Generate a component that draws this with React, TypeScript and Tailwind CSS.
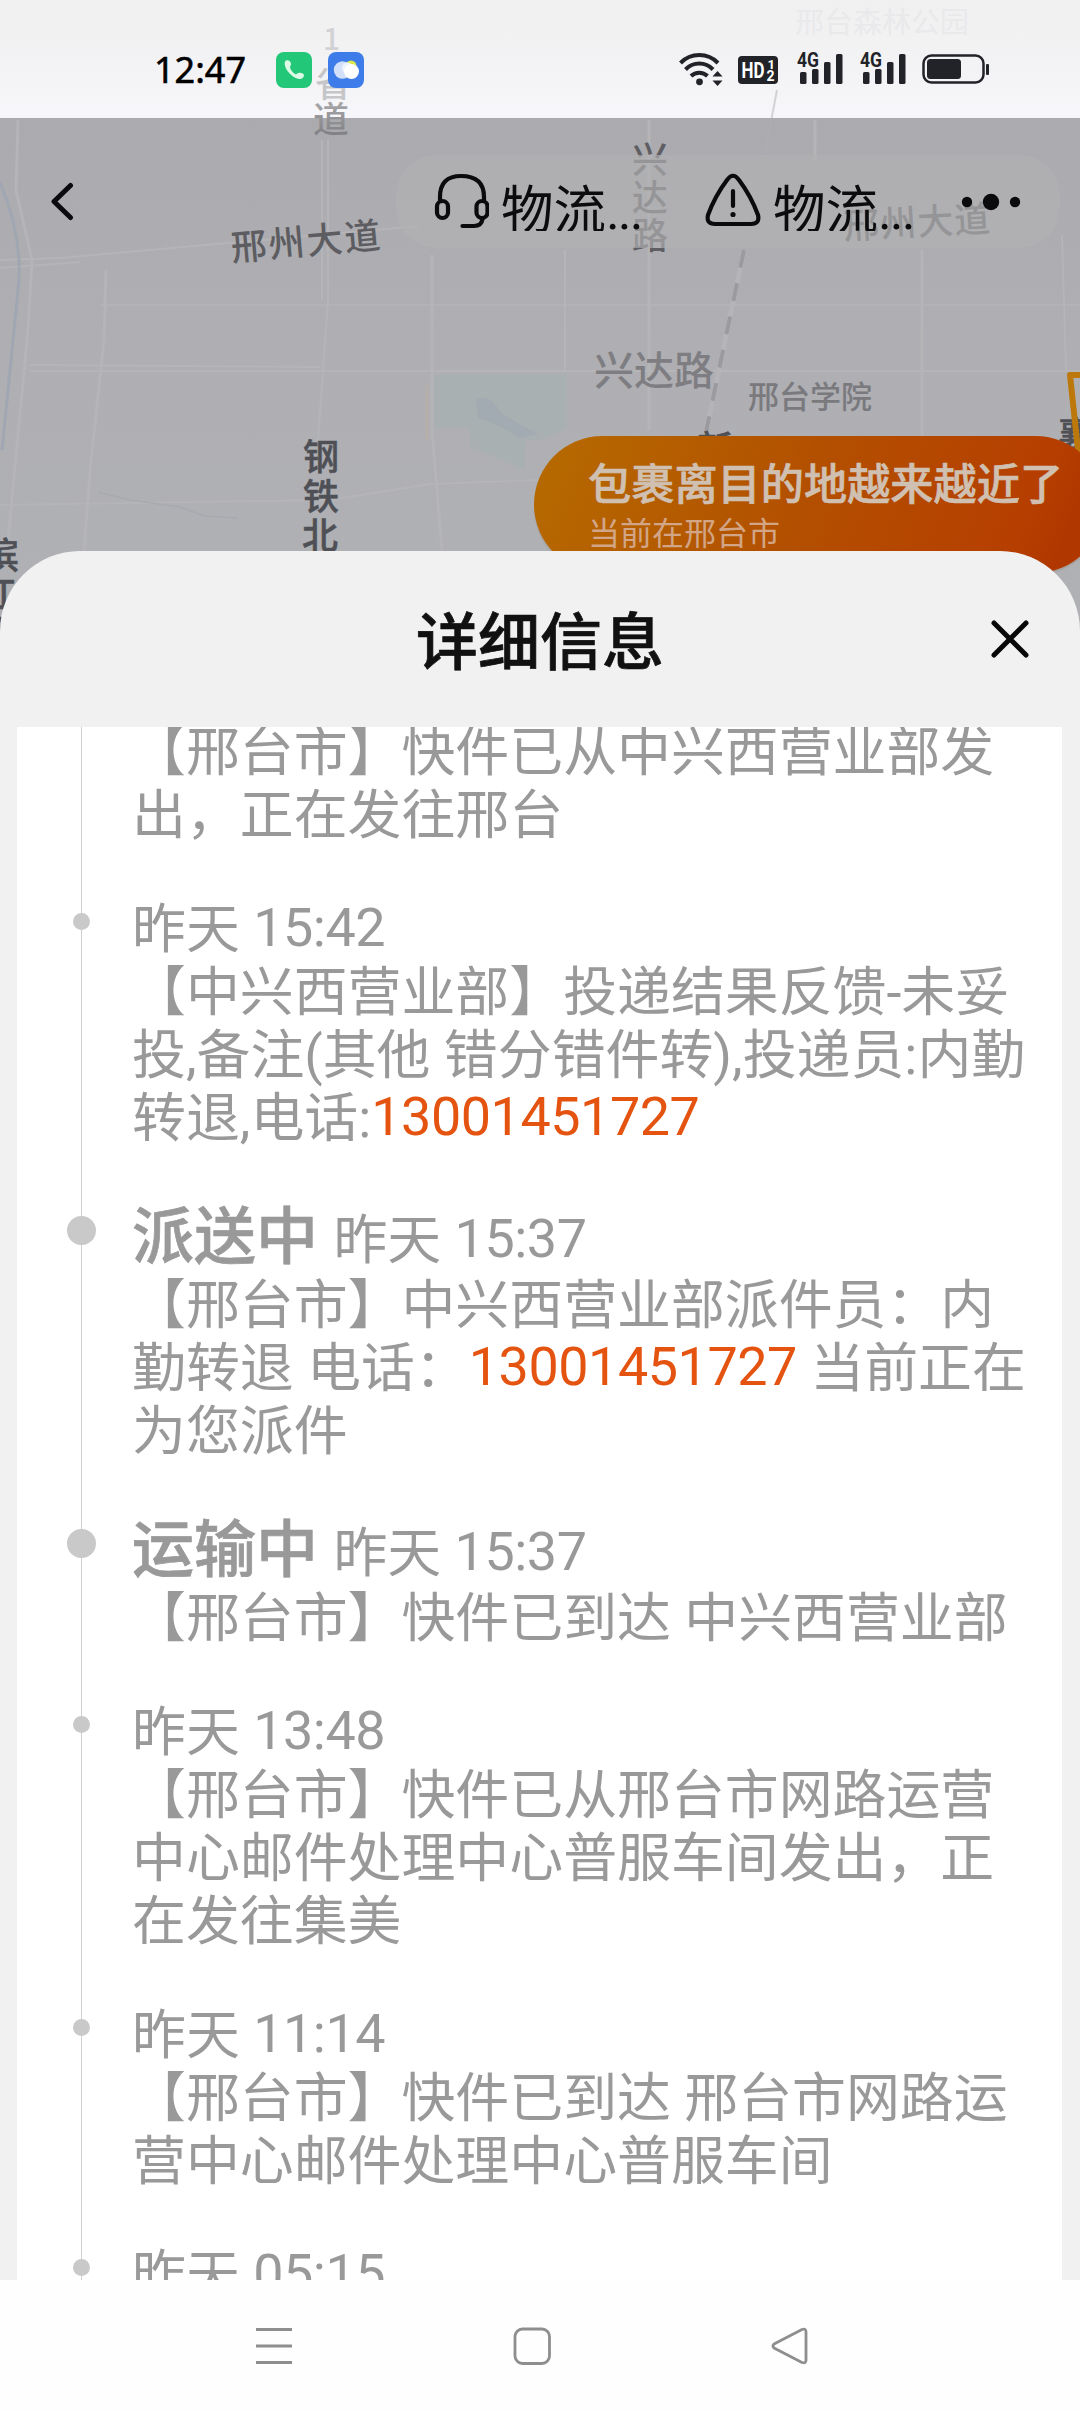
import React from "react";

type TrackEvent = {
  status?: string;
  day: string;
  clock: string;
  lines: React.ReactNode[];
};

const Phone = () => (
  <span className="align-[2px] leading-none tracking-[-0.45px] text-[#e4530f]">13001451727</span>
);

const Time = ({ day, clock }: { day: string; clock: string }) => (
  <span className="text-[53.9px]">
    {day} <span className="align-[2px] leading-none tracking-[-0.45px]">{clock}</span>
  </span>
);

const events: TrackEvent[] = [
  {
    day: "昨天",
    clock: "15:42",
    lines: [
      "【中兴西营业部】投递结果反馈-未妥",
      "投,备注(其他 错分错件转),投递员:内勤",
      <>转退,电话:<Phone /></>,
    ],
  },
  {
    status: "派送中",
    day: "昨天",
    clock: "15:37",
    lines: [
      "【邢台市】中兴西营业部派件员：内",
      <>勤转退 电话：<Phone /> 当前正在</>,
      "为您派件",
    ],
  },
  {
    status: "运输中",
    day: "昨天",
    clock: "15:37",
    lines: ["【邢台市】快件已到达 中兴西营业部"],
  },
  {
    day: "昨天",
    clock: "13:48",
    lines: [
      "【邢台市】快件已从邢台市网路运营",
      "中心邮件处理中心普服车间发出，正",
      "在发往集美",
    ],
  },
  {
    day: "昨天",
    clock: "11:14",
    lines: ["【邢台市】快件已到达 邢台市网路运", "营中心邮件处理中心普服车间"],
  },
  { day: "昨天", clock: "05:15", lines: [] },
];

const MapBackground = () => {
  return (
    <svg
      className="absolute left-0 top-0"
      width="1080"
      height="660"
      viewBox="0 0 1080 660"
      fontFamily="'Noto Sans CJK SC', sans-serif"
      fontWeight="500"
    >
      <defs>
        <linearGradient id="statusBg" x1="0" y1="0" x2="0" y2="1">
          <stop offset="0" stopColor="#f0f0f0" />
          <stop offset="0.6" stopColor="#f3f3f5" />
          <stop offset="1" stopColor="#f7f7fb" />
        </linearGradient>
        <linearGradient id="mapBg" x1="0" y1="0" x2="0" y2="1">
          <stop offset="0" stopColor="#aaaaaf" />
          <stop offset="0.4" stopColor="#aeaeb3" />
          <stop offset="1" stopColor="#b0b1b5" />
        </linearGradient>
        <linearGradient id="tip" x1="0" y1="0" x2="1" y2="0.1">
          <stop offset="0" stopColor="#b66b00" />
          <stop offset="0.5" stopColor="#b35000" />
          <stop offset="0.9" stopColor="#b63f00" />
          <stop offset="1" stopColor="#b03800" />
        </linearGradient>
        <linearGradient id="fade" x1="0" y1="0" x2="0" y2="1">
          <stop offset="0" stopColor="#b5b5b7" />
          <stop offset="1" stopColor="#77777a" />
        </linearGradient>
      </defs>

      <rect width="1080" height="118" fill="url(#statusBg)" />
      <rect y="118" width="1080" height="542" fill="url(#mapBg)" />

      {/* roads */}
      <g fill="none" stroke="#b5b5b8" strokeWidth="3">
        <path d="M0 260 L60 258 L420 226 M0 268 L80 262" strokeWidth="2" />
        <path d="M30 371 H1080 M30 365 L320 367" strokeWidth="2" />
        <path d="M0 505 L330 500 L430 484 L540 480" strokeWidth="2" />
        <path d="M100 305 H1080" strokeWidth="1.500" />
        <path d="M328 140 L328 300 L318 440 M322 140 L322 300" strokeWidth="2" />
        <path d="M106 270 L104 340 L90 470 L84 551" />
        <path d="M432 255 V430 L442 551" />
        <path d="M649 120 V430 M815 120 V160 M922 250 V436" />
        <path d="M565 250 V370 M1062 235 L1066 370" strokeWidth="2" />
        <path d="M18 120 L16 190 L32 260 L28 330 L8 540" />
        <path d="M744 250 L706 432" strokeWidth="5" />
      </g>
      <path d="M0 182 Q24 240 18 290 L2 450" fill="none" stroke="#a1a7b2" strokeWidth="3" />
      <path d="M744 250 L706 432" fill="none" stroke="#9b9b9f" strokeWidth="4" strokeDasharray="18 16" />
      <path d="M777 90 L765 153" fill="none" stroke="#b0b0b4" strokeWidth="2" opacity="0.5" />
      <path d="M98 492 L130 500 L180 507 L205 516 L238 518" fill="none" stroke="#a8aaaf" strokeWidth="1.500" />
      <path d="M434 375 H567 V428 L540 440 H525 V470 L470 446 V428 H434 Z" fill="#a9b0b1" />
      <path d="M476 400 Q490 392 500 412 Q518 424 538 434 L520 438 Q498 424 478 418 Z" fill="#a2aab2" />
      <path d="M427 385 V440" stroke="#b6aeab" strokeWidth="3" />

      {/* names that run below the header capsule */}
      <g fontSize="36" fill="#5f5f63">
        <text x="844" y="239" letterSpacing="1" transform="rotate(-3 844 239)">邢州大道</text>
        <text x="632" y="173">兴</text>
        <text x="632" y="211">达</text>
        <text x="632" y="249">路</text>
      </g>
      <rect x="396" y="155" width="664" height="93" rx="40" fill="#b2b2b3" opacity="0.66" />

      {/* road and place names */}
      <g fontSize="36">
        <text x="323" y="50" fontSize="30" fill="#d2d2d4">1</text>
        <text x="315" y="97" fill="#c6c6c8">省</text>
        <text x="313" y="133" fill="url(#fade)">道</text>
        <text x="795" y="33" fontSize="29" fontWeight="400" fill="#e9e9eb">邢台森林公园</text>
        <text x="232" y="261" letterSpacing="2" fill="#5c5c61" transform="rotate(-5 232 261)">邢州大道</text>
        <g fill="#4e5056" stroke="#4e5056" strokeWidth="0.5">
          <text x="303" y="470">钢</text>
          <text x="303" y="510">铁</text>
          <text x="302" y="549">北</text>
          <text x="-17" y="569">滨</text>
          <text x="-19" y="608">江</text>
          <text x="-22" y="648">路</text>
          <text x="697" y="462">新</text>
          <text x="1058" y="448">襄</text>
        </g>
        <text x="594" y="385" fontSize="40" fill="#7e7e82">兴达路</text>
        <text x="748" y="408" fontSize="31" fill="#7a7a7e">邢台学院</text>
      </g>

      <path d="M1090 375 H1070 L1079 460" fill="none" stroke="#bd780b" strokeWidth="6" strokeLinejoin="round" />
      <rect x="534" y="440.500" width="570" height="134" rx="67" fill="#8f7a66" opacity="0.25" />
      <rect x="534" y="436" width="570" height="137" rx="68.500" fill="url(#tip)" />
      <text x="588" y="500" fontSize="43.200" fill="#d0c0b2" stroke="#d0c0b2" strokeWidth="0.6">
        包裹离目的地越来越近了
      </text>
      <text x="588" y="545" fontSize="32" fontWeight="400" fill="#d2a587">当前在邢台市</text>
    </svg>
  );
};

const Signal = () => (
  <svg width="47" height="34" viewBox="0 0 47 34" fill="#222328">
    <text x="0" y="15" fontFamily="Roboto, sans-serif" fontWeight="700" fontSize="20" textLength="22" lengthAdjust="spacingAndGlyphs">
      4G
    </text>
    <rect x="3" y="20" width="6.500" height="12" rx="1.500" />
    <rect x="15" y="17" width="6.500" height="15" rx="1.500" />
    <rect x="27" y="10" width="6.500" height="22" rx="1.500" />
    <rect x="39" y="2" width="6.500" height="30" rx="1.500" />
  </svg>
);

const StatusBar = () => {
  return (
    <div className="relative flex h-[118px] shrink-0 items-start pl-[154px] pr-[90px] pt-[52px]">
      <span
        className="-mt-[2px] w-[122px] text-[36px] leading-[40px] text-black [-webkit-text-stroke:0.6px_black]"
        style={{ fontFamily: "'Noto Sans', sans-serif" }}
      >
        12:47
      </span>
      <svg width="36" height="36" viewBox="0 0 36 36">
        <rect width="36" height="36" rx="8" fill="#22c778" />
        <path
          d="M10 8.500 C12.500 7.500 14.500 9 15 11.500 C15.300 13 14 14 14 15.500 C15 18.500 17 21 20 22.500 C21.500 21 23.500 20.500 25 21 C28 21.500 28.500 23 27.500 25 C25.500 28 21 27.500 17 24.500 C12.500 21 9.500 17 8.800 13 C8.500 11 8.700 9.500 10 8.500 Z"
          fill="#dcfbe6"
        />
      </svg>
      <svg className="ml-4" width="36" height="36" viewBox="0 0 36 36">
        <rect width="36" height="36" rx="8" fill="#3e7de9" />
        <circle cx="23" cy="14" r="5.500" fill="#dbe84a" />
        <circle cx="14.500" cy="18" r="8.700" fill="#d3e0fa" />
        <circle cx="19.500" cy="16" r="5.500" fill="#eef4ff" />
        <circle cx="23.500" cy="19.500" r="7.500" fill="#fff" />
      </svg>

      <div className="ml-auto flex">
        <svg width="46" height="34" viewBox="0 0 46 34" fill="none" stroke="#222328" strokeWidth="4">
          <path d="M1.500 11 A26 26 0 0 1 39 11" />
          <path d="M6.500 17.500 A19 19 0 0 1 34 17.500" />
          <path d="M12 24 A12 12 0 0 1 28.500 24" />
          <circle cx="20.500" cy="29.800" r="3.400" fill="#222328" stroke="none" />
          <path d="M33.500 24.500 L38.500 19 L43.500 24.500 Z M33.500 28.500 L38.500 34 L43.500 28.500 Z" fill="#222328" stroke="none" />
        </svg>
        <svg className="ml-[13px]" width="40" height="34" viewBox="0 0 40 34" fontFamily="Roboto, sans-serif" fontWeight="700" fill="#fff">
          <rect y="4" width="40" height="28" rx="4" fill="#222328" />
          <text x="3.500" y="26" fontSize="22" textLength="23" lengthAdjust="spacingAndGlyphs">HD</text>
          <text x="29.500" y="17" fontSize="13">1</text>
          <text x="28.500" y="29" fontSize="14">2</text>
        </svg>
        <div className="ml-[19px]">
          <Signal />
        </div>
        <div className="ml-4">
          <Signal />
        </div>
        <svg className="ml-[15px]" width="68" height="34" viewBox="0 0 68 34">
          <rect x="1.500" y="3.500" width="60" height="27" rx="8" fill="none" stroke="#222328" strokeWidth="2.500" />
          <rect x="5" y="7" width="34" height="20" rx="3.500" fill="#222328" />
          <rect x="64" y="12" width="3" height="11" rx="1" fill="#222328" />
        </svg>
      </div>
    </div>
  );
};

const HeaderLabel = () => (
  <span className="mt-[10px] h-[50px] w-[144px] overflow-hidden whitespace-nowrap text-[52.500px] leading-[60px] text-[#0c0c0e]">
    物流<span className="tracking-[-2px]">...</span>
  </span>
);

const TopBar = () => {
  return (
    <div className="relative flex h-[433px] shrink-0 items-start pl-[50px] pt-[53px]">
      <svg className="mt-[11px]" width="24" height="40" viewBox="0 0 24 40" fill="none" stroke="#0b0b0d" strokeWidth="5" strokeLinecap="round" strokeLinejoin="round">
        <path d="M20.500 3.500 L4 19.500 L20.500 35.500" />
      </svg>
      <svg className="ml-[359px]" width="56" height="60" viewBox="0 0 56 60" fill="none" stroke="#0b0b0d" strokeWidth="4.200" strokeLinecap="round">
        <path d="M7 29 V26 Q7 5 28 5 Q51 5 51 26 V29" />
        <rect x="4" y="30" width="11" height="17" rx="5.500" />
        <rect x="43.500" y="30" width="11" height="17" rx="5.500" />
        <path d="M49.500 48 Q48.500 55 41 55 H29.500" />
      </svg>
      <div className="ml-[12px] flex">
        <HeaderLabel />
      </div>
      <svg className="ml-[60px]" width="56" height="60" viewBox="0 0 56 60" fill="none" stroke="#0b0b0d" strokeWidth="4.200" strokeLinecap="round" strokeLinejoin="round">
        <path d="M22 9 Q28 0.500 34 9 Q46 25 53 44 Q55 53 46 53 H10 Q1 53 3 44 Q10 25 22 9 Z" />
        <path d="M28 20 V35" />
        <circle cx="28" cy="43.500" r="2.600" fill="#0b0b0d" stroke="none" />
      </svg>
      <div className="ml-[12px] flex">
        <HeaderLabel />
      </div>
      <svg className="ml-[44px] mt-[22px]" width="60" height="18" viewBox="0 0 60 18" fill="#0b0b0d">
        <circle cx="6" cy="9" r="5.200" />
        <circle cx="30" cy="9" r="8.200" />
        <circle cx="54" cy="9" r="5.200" />
      </svg>
    </div>
  );
};

const EventRow = ({ event }: { event: TrackEvent }) => {
  return (
    <div className="mb-[51px] flex">
      <div className="flex w-[129px] shrink-0 justify-center">
        {event.status ? (
          <div className="mt-[15px] h-[29px] w-[29px] rounded-full bg-[#c9c9c9]" />
        ) : (
          <div className="mt-[15px] h-[17px] w-[17px] rounded-full bg-[#c9c9c9]" />
        )}
      </div>
      <div className="-ml-[14px] whitespace-nowrap">
        {event.status ? (
          <div className="h-[73px] text-[62px] leading-[73px]">
            <span className="font-medium [-webkit-text-stroke:0.7px_#999]">{event.status}</span>{" "}
            <Time day={event.day} clock={event.clock} />
          </div>
        ) : (
          <div className="h-[63px]">
            <Time day={event.day} clock={event.clock} />
          </div>
        )}
        {event.lines.map((line, i) => (
          <div key={i} className="h-[63px]">
            {line}
          </div>
        ))}
      </div>
    </div>
  );
};

const DetailSheet = () => {
  return (
    <div className="relative flex h-[1729px] shrink-0 flex-col rounded-t-[80px] bg-[#f1f1f1]">
      <div className="flex h-[176px] shrink-0 items-center justify-between pl-[50px] pr-[50px]">
        <div className="w-10" />
        <h1 className="pt-[10px] text-[62px] font-medium leading-[72px] text-[#111] [-webkit-text-stroke:0.7px_#111]">
          详细信息
        </h1>
        <svg width="40" height="40" viewBox="0 0 40 40" fill="none" stroke="#080808" strokeWidth="5" strokeLinecap="round">
          <path d="M4 4 L36 36 M36 4 L4 36" />
        </svg>
      </div>
      <div className="relative ml-[17px] mr-[18px] min-h-0 flex-1 overflow-hidden bg-white text-[53.9px] leading-[63px] text-[#999]">
        <div className="absolute left-[64px] top-0 h-full w-px bg-[#d0d0d0]" />
        <div className="relative -mt-[6px]">
          <div className="mb-[51px] ml-[115px] whitespace-nowrap">
            <div>【邢台市】快件已从中兴西营业部发</div>
            <div>出，正在发往邢台</div>
          </div>
          {events.map((event, i) => (
            <EventRow key={i} event={event} />
          ))}
        </div>
      </div>
    </div>
  );
};

const NavBar = () => {
  return (
    <div className="flex h-[132px] items-start bg-[#fefefe] pl-[255px] pt-[47px]">
      <svg width="38" height="38" viewBox="0 0 38 38" stroke="#8e8e8e" strokeWidth="3">
        <path d="M1 2.500 H37 M1 19 H37 M1 35.500 H37" />
      </svg>
      <svg className="ml-[220px]" width="38" height="38" viewBox="0 0 38 38" fill="none" stroke="#8e8e8e" strokeWidth="2.800">
        <rect x="2" y="2" width="34.500" height="34.500" rx="7.500" />
      </svg>
      <svg className="ml-[220px]" width="38" height="38" viewBox="0 0 38 38" fill="none" stroke="#8e8e8e" strokeWidth="2.800" strokeLinejoin="round">
        <path d="M3 17 L31 2.500 Q35 1 35 5 V33 Q35 37 31 35.500 L3 21 Q1 19 3 17 Z" />
      </svg>
    </div>
  );
};

export default function App() {
  return (
    <div
      className="relative flex h-[2412px] w-[1080px] flex-col overflow-hidden"
      style={{ fontFamily: "Roboto, 'Noto Sans CJK SC', sans-serif" }}
    >
      <MapBackground />
      <StatusBar />
      <TopBar />
      <DetailSheet />
      <NavBar />
    </div>
  );
}
